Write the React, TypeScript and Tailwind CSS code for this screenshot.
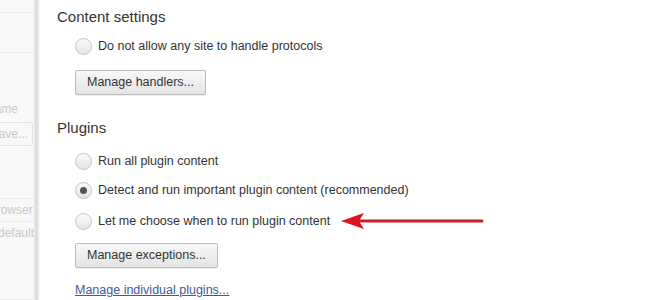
import React from 'react';

function Radio({ checked }: { checked?: boolean }) {
    return (
        <span className="w-[17px] h-[17px] rounded-full border border-[#c4c4c4] bg-gradient-to-b from-[#fbfbfb] to-[#e4e4e4] flex items-center justify-center shrink-0">
            {checked && <span className="w-[7px] h-[7px] rounded-full bg-[#555]" />}
        </span>
    );
}

function Option({ label, checked, arrow }: { label: string; checked?: boolean; arrow?: boolean }) {
    return (
        <div className="flex items-center gap-[6px] h-[20px]">
            <Radio checked={checked} />
            <span>{label}</span>
            {arrow && (
                <svg width="146" height="16" viewBox="0 0 146 16" className="ml-[4px]">
                    <line x1="16" y1="8" x2="142" y2="8" stroke="#c8202a" strokeWidth="3" strokeLinecap="round" />
                    <polygon points="1,8 24,0 19,8 24,16" fill="#e0141e" />
                </svg>
            )}
        </div>
    );
}

function Button({ children }: { children: React.ReactNode }) {
    return (
        <button className="h-[25px] px-[11px] border border-[#bdbdbd] rounded-[2px] bg-gradient-to-b from-[#f8f8f8] to-[#e4e4e4] text-[#333] text-[12.5px] shadow-[0_1px_0_rgba(0,0,0,0.06)]">
            {children}
        </button>
    );
}

export default function App() {
    return (
        <div className="w-[660px] h-[300px] overflow-hidden flex bg-white text-[#333] text-[12.5px]" style={{ fontFamily: '"Liberation Sans", Arial, sans-serif' }}>
            {/* faded settings page behind the dialog */}
            <aside className="w-[34px] shrink-0 bg-[#f8f8f8] text-[#c9c9c9] text-[12px] flex flex-col overflow-hidden">
                <div className="h-[13px] border-b border-[#ececec]" />
                <div className="h-[40px] border-b border-[#ececec]" />
                <div className="h-[48px]" />
                <div className="-ml-[14px] whitespace-nowrap">Name</div>
                <div className="mt-[4px] -ml-[22px] w-[55px] h-[24px] border border-[#e2e2e2] rounded-[2px] flex items-center justify-end pr-[4px]">Save...</div>
                <div className="h-[52px]" />
                <div className="border-t border-b border-[#ebebeb] h-[24px] flex items-center -ml-[10px] whitespace-nowrap">browser</div>
                <div className="h-[24px] flex items-center -ml-[2px] whitespace-nowrap">default</div>
                <div className="h-[55px] border-b border-[#ebebeb]" />
            </aside>
            <div className="w-[6px] shrink-0 bg-gradient-to-r from-[#e9e9e9] via-[#dadada] to-white" />

            <main className="flex-1 pl-[17px] pt-[7px]">
                <h2 className="text-[15px] leading-[20px] text-[#333]">Content settings</h2>
                <div className="pl-[18px] mt-[9px] flex flex-col items-start">
                    <Option label="Do not allow any site to handle protocols" />
                    <div className="mt-[14px]">
                        <Button>Manage handlers...</Button>
                    </div>
                </div>

                <h2 className="text-[15px] leading-[20px] text-[#333] mt-[23px]">Plugins</h2>
                <div className="pl-[18px] mt-[13px] flex flex-col items-start">
                    <Option label="Run all plugin content" />
                    <div className="mt-[9px]">
                        <Option label="Detect and run important plugin content (recommended)" checked />
                    </div>
                    <div className="mt-[11px]">
                        <Option label="Let me choose when to run plugin content" arrow />
                    </div>
                </div>
                <div className="pl-[18px] mt-[12px]">
                    <Button>Manage exceptions...</Button>
                </div>
                <div className="pl-[18px] mt-[13px]">
                    <a className="text-[#3d5a99] underline text-[12.5px]">Manage individual plugins...</a>
                </div>
            </main>
        </div>
    );
}
